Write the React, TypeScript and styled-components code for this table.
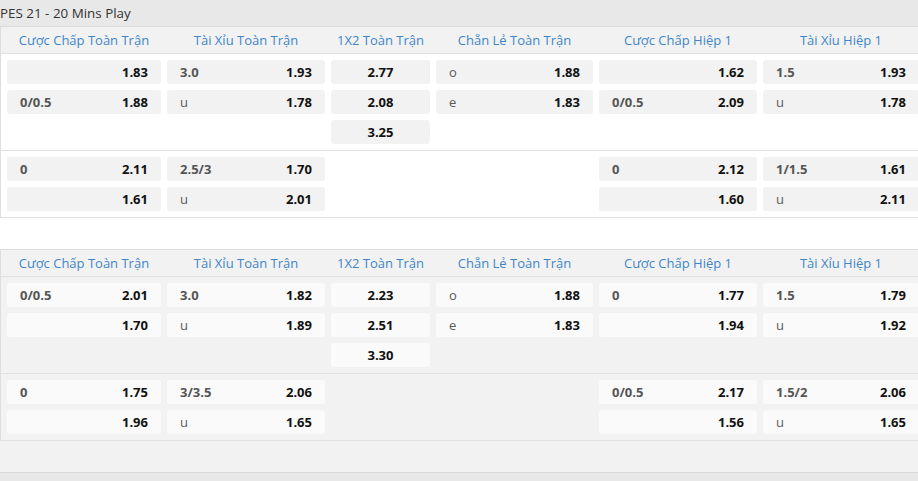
import React from 'react';
import styled, { createGlobalStyle } from 'styled-components';

const Global = createGlobalStyle`
  html, body { margin: 0; padding: 0; background: #ffffff; }
  body { font-family: "Open Sans", "Noto Sans", sans-serif; font-size: 13px; overflow: hidden; }
`;

const COLS = '154px 158px 99px 157px 158px 156px';

const Page = styled.div`
  width: 940px;
  height: 481px;
  overflow: hidden;
`;

const TitleBar = styled.div`
  height: 26px;
  line-height: 26px;
  background: #e8e8e8;
  border-bottom: 1px solid #d9d9d9;
  color: #333333;
  font-size: 13.4px;
  white-space: nowrap;
`;

const Table = styled.div<{ $shade: boolean; $top?: boolean }>`
  background: ${p => (p.$shade ? '#f2f2f2' : '#ffffff')};
  border-left: 1px solid #dedede;
  border-top: ${p => (p.$top ? '1px solid #dedede' : 'none')};
  margin-top: ${p => (p.$top ? '31px' : '0')};
`;

const HeaderRow = styled.div`
  display: grid;
  grid-template-columns: ${COLS};
  column-gap: 6px;
  padding: 0 6px;
  height: 26px;
  align-items: center;
  background: #f2f2f2;
  border-bottom: 1px solid #e0e0e0;
`;

const HeaderCell = styled.div`
  text-align: center;
  color: #3f86c9;
  font-size: 13px;
  white-space: nowrap;
`;

const Group = styled.div`
  display: grid;
  grid-template-columns: ${COLS};
  column-gap: 6px;
  padding: 6px;
  border-bottom: 1px solid #e0e0e0;
`;

const Column = styled.div`
  display: flex;
  flex-direction: column;
  gap: 6px;
`;

const Cell = styled.div<{ $shade: boolean; $center?: boolean }>`
  height: 24px;
  border-radius: 3px;
  background: ${p => (p.$shade ? '#fafafa' : '#f2f2f2')};
  display: flex;
  align-items: center;
  justify-content: ${p => (p.$center ? 'center' : 'space-between')};
  padding: 0 13px;
  box-sizing: border-box;
`;

const Label = styled.span<{ $light?: boolean }>`
  color: ${p => (p.$light ? '#5a5a5a' : '#555555')};
  font-weight: ${p => (p.$light ? 400 : 700)};
  font-size: 13px;
`;

const Odds = styled.span`
  color: #111111;
  font-weight: 700;
  font-size: 13px;
`;

const Footer = styled.div`
  height: 31px;
  background: #f2f2f2;
  border-bottom: 1px solid #d9d9d9;
`;

const NextBar = styled.div`
  height: 8px;
  background: #e8e8e8;
`;

type C = [string, string];
type Col = { cells: C[]; center?: boolean };
type G = Col[];

const headers = [
  'Cược Chấp Toàn Trận',
  'Tài Xỉu Toàn Trận',
  '1X2 Toàn Trận',
  'Chẵn Lẻ Toàn Trận',
  'Cược Chấp Hiệp 1',
  'Tài Xỉu Hiệp 1',
];

const table1: G[] = [
  [
    { cells: [['', '1.83'], ['0/0.5', '1.88']] },
    { cells: [['3.0', '1.93'], ['u', '1.78']] },
    { cells: [['', '2.77'], ['', '2.08'], ['', '3.25']], center: true },
    { cells: [['o', '1.88'], ['e', '1.83']] },
    { cells: [['', '1.62'], ['0/0.5', '2.09']] },
    { cells: [['1.5', '1.93'], ['u', '1.78']] },
  ],
  [
    { cells: [['0', '2.11'], ['', '1.61']] },
    { cells: [['2.5/3', '1.70'], ['u', '2.01']] },
    { cells: [] },
    { cells: [] },
    { cells: [['0', '2.12'], ['', '1.60']] },
    { cells: [['1/1.5', '1.61'], ['u', '2.11']] },
  ],
];

const table2: G[] = [
  [
    { cells: [['0/0.5', '2.01'], ['', '1.70']] },
    { cells: [['3.0', '1.82'], ['u', '1.89']] },
    { cells: [['', '2.23'], ['', '2.51'], ['', '3.30']], center: true },
    { cells: [['o', '1.88'], ['e', '1.83']] },
    { cells: [['0', '1.77'], ['', '1.94']] },
    { cells: [['1.5', '1.79'], ['u', '1.92']] },
  ],
  [
    { cells: [['0', '1.75'], ['', '1.96']] },
    { cells: [['3/3.5', '2.06'], ['u', '1.65']] },
    { cells: [] },
    { cells: [] },
    { cells: [['0/0.5', '2.17'], ['', '1.56']] },
    { cells: [['1.5/2', '2.06'], ['u', '1.65']] },
  ],
];

const isLetter = (s: string) => /^[a-z]$/.test(s);

function OddsTable({ groups, shade, top }: { groups: G[]; shade: boolean; top?: boolean }) {
  return (
    <Table $shade={shade} $top={top}>
      <HeaderRow>
        {headers.map(h => (
          <HeaderCell key={h}>{h}</HeaderCell>
        ))}
      </HeaderRow>
      {groups.map((g, gi) => (
        <Group key={gi}>
          {g.map((col, ci) => (
            <Column key={ci}>
              {col.cells.map((c, k) => (
                <Cell key={k} $shade={shade} $center={col.center}>
                  {!col.center && <Label $light={isLetter(c[0])}>{c[0]}</Label>}
                  <Odds>{c[1]}</Odds>
                </Cell>
              ))}
            </Column>
          ))}
        </Group>
      ))}
    </Table>
  );
}

export default function App() {
  return (
    <Page>
      <Global />
      <TitleBar>PES 21 - 20 Mins Play</TitleBar>
      <OddsTable groups={table1} shade={false} />
      <OddsTable groups={table2} shade={true} top />
      <Footer />
      <NextBar />
    </Page>
  );
}
